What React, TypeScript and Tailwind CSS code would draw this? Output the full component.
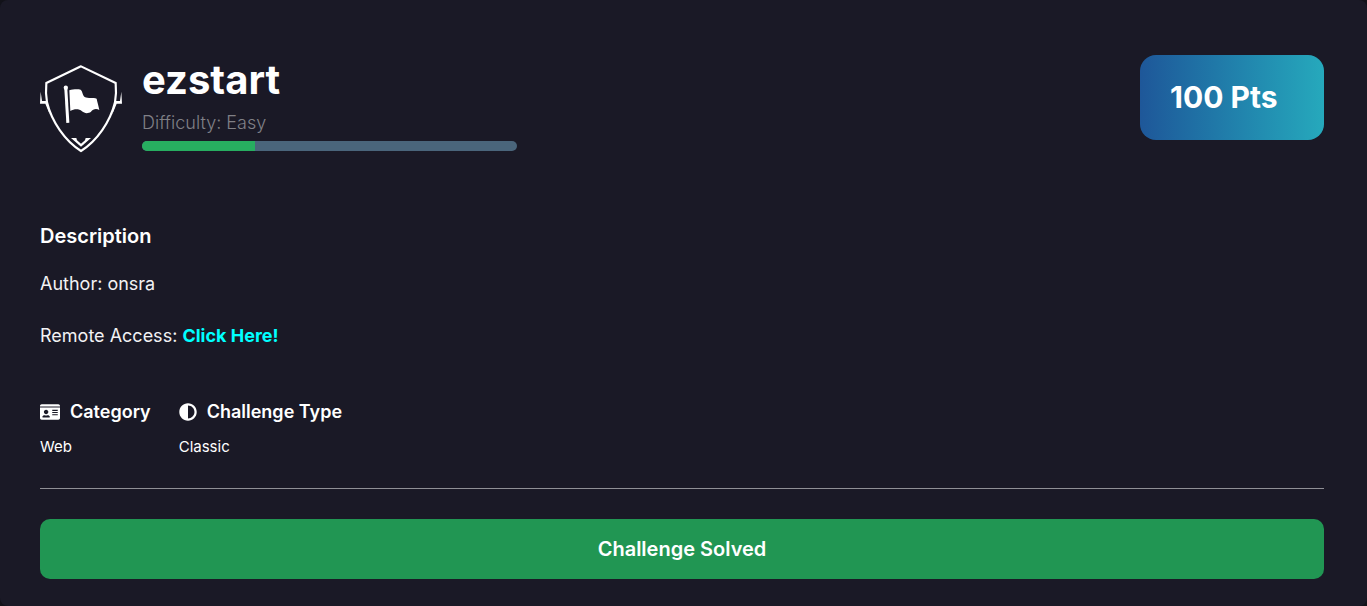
import React from "react";
import { FaAdjust, FaIdCard } from "react-icons/fa";

function ShieldFlag() {
  return (
    <svg viewBox="30 30 246 264" className="h-[88px] w-[82px] shrink-0" fill="none" aria-hidden="true">
      <path
        d="M153 34 L49 84 C47 105 48 125 51 142 C65 200 105 258 153 288 C201 258 241 200 255 142 C258 125 259 105 257 84 Z"
        stroke="white"
        strokeWidth="6.5"
      />
      <path d="M32 110 L30 146 L46 146 L60 180 L50 138 L36 138 Z" fill="white" />
      <path d="M274 110 L276 146 L260 146 L246 180 L256 138 L270 138 Z" fill="white" />
      <circle cx="107.5" cy="98" r="6.5" fill="white" />
      <path d="M103 102 L112 102 L118 203 L109 204 Z" fill="white" />
      <path
        d="M118 106 C128 103 142 102 152 104 C158 109 157 120 164 126 C174 131 190 127 200 131 C202 142 206 153 208 165 C199 160 189 162 183 170 C175 176 164 176 156 169 C146 160 132 162 121 168 Z"
        fill="white"
      />
      <path d="M123 249 L139 249 L141 256 L153 266 L165 256 L167 249 L183 249 L153 275 Z" fill="white" />
    </svg>
  );
}

function Fact({ icon, label, value }: { icon: React.ReactNode; label: string; value: string }) {
  return (
    <div>
      <dt className="flex items-center gap-2.5 text-lg leading-7 font-semibold">
        {icon}
        {label}
      </dt>
      <dd className="mt-[9px] text-[15px] leading-6">{value}</dd>
    </div>
  );
}

export default function App() {
  return (
    <div className="min-h-screen bg-[#121219] font-['Inter',sans-serif] text-white">
      <main className="min-h-screen rounded-lg bg-[#1a1926] pt-[54px] pr-[43px] pb-6 pl-10">
        <header className="flex items-start justify-between gap-5">
          <div className="flex min-w-0 items-start gap-5">
            <div className="pt-[11px]">
              <ShieldFlag />
            </div>
            <div className="w-[375px]">
              <h1 className="text-[40px] leading-[52px] font-bold">ezstart</h1>
              <p className="mt-[3px] text-lg leading-7 font-light text-[#808086]">Difficulty: Easy</p>
              <div
                role="progressbar"
                aria-label="Difficulty"
                aria-valuenow={30}
                className="mt-1 h-2.5 overflow-hidden rounded-full bg-[#4a657b]"
              >
                <div className="h-full w-[30%] bg-[#27ae60]" />
              </div>
            </div>
          </div>
          <div className="mt-px flex h-[85px] w-[184px] shrink-0 items-center rounded-2xl bg-linear-to-r from-[#1e5799] to-[#26a9bc] pl-[30px] text-[30px] font-bold">
            100 Pts
          </div>
        </header>

        <section className="mt-[69px]">
          <h2 className="text-xl leading-7 font-semibold">Description</h2>
          <div className="mt-5 flex flex-col gap-6 text-lg leading-7 text-[#f2f2f4]">
            <p>Author: onsra</p>
            <p>
              Remote Access:{" "}
              <a href="#" className="font-bold text-[#00ffff]">
                Click Here!
              </a>
            </p>
          </div>
        </section>

        <dl className="mt-12 flex gap-7">
          <Fact icon={<FaIdCard className="h-[18px] w-5" />} label="Category" value="Web" />
          <Fact icon={<FaAdjust className="size-[18px]" />} label="Challenge Type" value="Classic" />
        </dl>

        <hr className="mt-[29px] border-[#8f8f95]" />

        <button
          type="button"
          className="mt-[30px] h-[60px] w-full rounded-[10px] bg-[#219653] text-xl font-semibold"
        >
          Challenge Solved
        </button>
      </main>
    </div>
  );
}
